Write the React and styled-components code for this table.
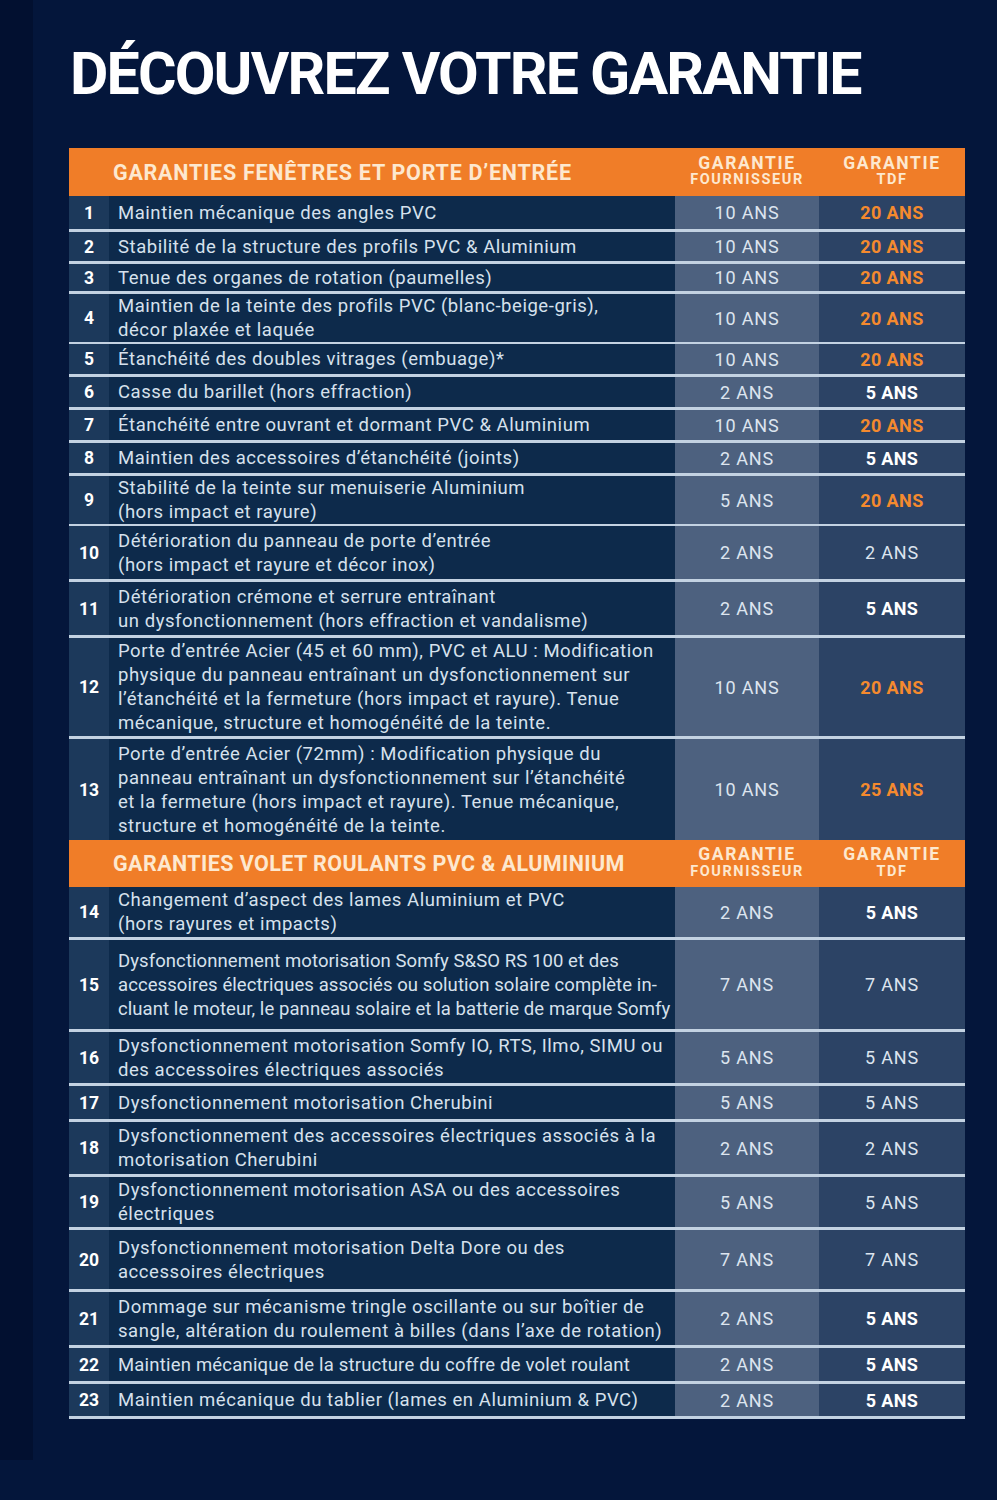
import React from "react";
import styled, { createGlobalStyle } from "styled-components";

const Global = createGlobalStyle`
  html, body { margin: 0; padding: 0; background: #04163b; }
  body { font-family: Roboto, "Liberation Sans", sans-serif; }
`;

const Page = styled.div`
  display: flex;
  width: 997px;
  min-height: 1500px;
  background: #04163b;
`;

const Stripe = styled.div`
  width: 33px;
  height: 1460px;
  flex: none;
  background: #021030;
`;

const Content = styled.div`
  flex: 1;
  padding: 44px 0 0 36px;
`;

const Title = styled.h1`
  margin: 0 0 44px 1px;
  font-family: Roboto, "Liberation Sans", sans-serif;
  font-weight: 700;
  font-size: 59px;
  line-height: 60px;
  letter-spacing: -1.8px;
  color: #ffffff;
`;

const Table = styled.div`
  width: 896px;
  display: flex;
  flex-direction: column;
`;

const cols = "40px 566px 144px 146px";

const HeadRow = styled.div`
  display: grid;
  grid-template-columns: ${cols};
  height: ${(p) => p.$h}px;
  background: #f07d28;
  color: #fde8cf;
  font-weight: 700;
`;

const HeadTitle = styled.div`
  grid-column: 2;
  display: flex;
  align-items: center;
  padding-left: 4px;
  font-size: 21.5px;
  letter-spacing: ${(p) => p.$ls}px;
`;

const HeadCol = styled.div`
  display: flex;
  flex-direction: column;
  align-items: center;
  justify-content: center;
  line-height: 1;
  padding-bottom: 2px;
`;

const HeadTop = styled.span`
  font-size: 17.5px;
  letter-spacing: 1.6px;
`;

const HeadSub = styled.span`
  font-size: 14.5px;
  margin-top: 1px;
  letter-spacing: 1.6px;
`;

const Row = styled.div`
  display: grid;
  grid-template-columns: ${cols};
  height: ${(p) => p.$h}px;
  box-sizing: border-box;
  border-bottom: ${(p) => (p.$rule ? "3px solid #c3d2e2" : "none")};
`;

const Num = styled.div`
  background: #1c395b;
  color: #ffffff;
  font-weight: 700;
  font-size: 17.5px;
  display: flex;
  align-items: center;
  justify-content: center;
`;

const Desc = styled.div`
  background: #0d2a4b;
  color: #d6e1ed;
  font-size: 18.5px;
  line-height: 24px;
  letter-spacing: ${(p) => p.$ls}px;
  display: flex;
  align-items: center;
  padding-left: 9px;
  white-space: pre-line;
`;

const Val = styled.div`
  background: ${(p) => (p.$tdf ? "#2c4365" : "#4d617f")};
  display: flex;
  align-items: center;
  justify-content: center;
  font-size: 18px;
  letter-spacing: ${(p) => (p.$kind === "plain" ? 0.8 : 0.4)}px;
  font-weight: ${(p) => (p.$kind === "plain" ? 400 : 700)};
  color: ${(p) =>
    p.$kind === "orange" ? "#f48a2e" : p.$kind === "white" ? "#ffffff" : "#dde5ef"};
`;

const section1 = [
  [1, "Maintien mécanique des angles PVC", "10 ANS", "20 ANS", "orange", 36],
  [2, "Stabilité de la structure des profils PVC & Aluminium", "10 ANS", "20 ANS", "orange", 32],
  [3, "Tenue des organes de rotation (paumelles)", "10 ANS", "20 ANS", "orange", 30],
  [4, "Maintien de la teinte des profils PVC (blanc-beige-gris),\ndécor plaxée et laquée", "10 ANS", "20 ANS", "orange", 50],
  [5, "Étanchéité des doubles vitrages (embuage)*", "10 ANS", "20 ANS", "orange", 33],
  [6, "Casse du barillet (hors effraction)", "2 ANS", "5 ANS", "white", 33],
  [7, "Étanchéité entre ouvrant et dormant PVC & Aluminium", "10 ANS", "20 ANS", "orange", 33],
  [8, "Maintien des accessoires d’étanchéité (joints)", "2 ANS", "5 ANS", "white", 33],
  [9, "Stabilité de la teinte sur menuiserie Aluminium\n(hors impact et rayure)", "5 ANS", "20 ANS", "orange", 50],
  [10, "Détérioration du panneau de porte d’entrée\n(hors impact et rayure et décor inox)", "2 ANS", "2 ANS", "plain", 56],
  [11, "Détérioration crémone et serrure entraînant\nun dysfonctionnement (hors effraction et vandalisme)", "2 ANS", "5 ANS", "white", 56],
  [12, "Porte d’entrée Acier (45 et 60 mm), PVC et ALU : Modification\nphysique du panneau entraînant un dysfonctionnement sur\nl’étanchéité et la fermeture (hors impact et rayure). Tenue\nmécanique, structure et homogénéité de la teinte.", "10 ANS", "20 ANS", "orange", 101],
  [13, "Porte d’entrée Acier (72mm) : Modification physique du\npanneau entraînant un dysfonctionnement sur l’étanchéité\net la fermeture (hors impact et rayure). Tenue mécanique,\nstructure et homogénéité de la teinte.", "10 ANS", "25 ANS", "orange", 101, false],
];

const section2 = [
  [14, "Changement d’aspect des lames Aluminium et PVC\n(hors rayures et impacts)", "2 ANS", "5 ANS", "white", 53],
  [15, "Dysfonctionnement motorisation Somfy S&SO RS 100 et des\naccessoires électriques associés ou solution solaire complète in-\ncluant le moteur, le panneau solaire et la batterie de marque Somfy", "7 ANS", "7 ANS", "plain", 92, true, 0.08],
  [16, "Dysfonctionnement motorisation Somfy IO, RTS, Ilmo, SIMU ou\ndes accessoires électriques associés", "5 ANS", "5 ANS", "plain", 54],
  [17, "Dysfonctionnement motorisation Cherubini", "5 ANS", "5 ANS", "plain", 36],
  [18, "Dysfonctionnement des accessoires électriques associés à la\nmotorisation Cherubini", "2 ANS", "2 ANS", "plain", 55],
  [19, "Dysfonctionnement motorisation ASA ou des accessoires\nélectriques", "5 ANS", "5 ANS", "plain", 53],
  [20, "Dysfonctionnement motorisation Delta Dore ou des\naccessoires électriques", "7 ANS", "7 ANS", "plain", 62],
  [21, "Dommage sur mécanisme tringle oscillante ou sur boîtier de\nsangle, altération du roulement à billes (dans l’axe de rotation)", "2 ANS", "5 ANS", "white", 56],
  [22, "Maintien mécanique de la structure du coffre de volet roulant", "2 ANS", "5 ANS", "white", 36, true, 0.2],
  [23, "Maintien mécanique du tablier (lames en Aluminium & PVC)", "2 ANS", "5 ANS", "white", 35],
];

function Header({ title, h, ls }) {
  return (
    <HeadRow $h={h}>
      <HeadTitle $ls={ls}>{title}</HeadTitle>
      <HeadCol>
        <HeadTop>GARANTIE</HeadTop>
        <HeadSub>FOURNISSEUR</HeadSub>
      </HeadCol>
      <HeadCol>
        <HeadTop>GARANTIE</HeadTop>
        <HeadSub>TDF</HeadSub>
      </HeadCol>
    </HeadRow>
  );
}

function Line({ r }) {
  const [n, text, four, tdf, kind, h, rule = true, ls = 0.55] = r;
  return (
    <Row $h={h} $rule={rule}>
      <Num>{n}</Num>
      <Desc $ls={ls}>{text}</Desc>
      <Val $kind="plain">{four}</Val>
      <Val $tdf $kind={kind}>{tdf}</Val>
    </Row>
  );
}

export default function App() {
  return (
    <>
      <Global />
      <Page>
        <Stripe />
        <Content>
          <Title>DÉCOUVREZ VOTRE GARANTIE</Title>
          <Table>
            <Header title="GARANTIES FENÊTRES ET PORTE D’ENTRÉE" h={48} ls={0.75} />
            {section1.map((r) => (
              <Line key={r[0]} r={r} />
            ))}
            <Header title="GARANTIES VOLET ROULANTS PVC & ALUMINIUM" h={47} ls={0.42} />
            {section2.map((r) => (
              <Line key={r[0]} r={r} />
            ))}
          </Table>
        </Content>
      </Page>
    </>
  );
}
